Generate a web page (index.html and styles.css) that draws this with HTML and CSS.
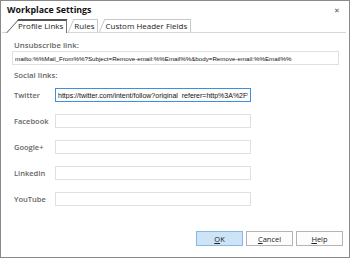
FILE: index.html
```html
<!DOCTYPE html>
<html lang="en">
<head>
  <meta charset="UTF-8">
  <title>Workplace Settings</title>
  <link rel="stylesheet" href="styles.css">
</head>
<body>

<div class="window">
  <div class="titlebar">
    <span class="title">Workplace Settings</span>
    <span class="close">&#x2715;</span>
  </div>

  <div class="tabs">
    <div class="tab active">Profile Links</div>
    <div class="tab">Rules</div>
    <div class="tab">Custom Header Fields</div>
  </div>

  <div class="panel">
    <div class="section-label">Unsubscribe link:</div>
    <input class="field wide" type="text" value="mailto:%%Mail_From%%?Subject=Remove-email:%%Email%%&amp;body=Remove-email:%%Email%%">

    <div class="section-label social">Social links:</div>
    <div class="rows">
      <div class="row">
        <label>Twitter</label>
        <input class="field focus" type="text" value="https://twitter.com/intent/follow?original_referer=http%3A%2F%2Fwww.example.com">
      </div>
      <div class="row">
        <label>Facebook</label>
        <input class="field" type="text">
      </div>
      <div class="row">
        <label>Google+</label>
        <input class="field" type="text">
      </div>
      <div class="row">
        <label>LinkedIn</label>
        <input class="field" type="text">
      </div>
      <div class="row">
        <label>YouTube</label>
        <input class="field" type="text">
      </div>
    </div>
  </div>

  <div class="buttons">
    <button class="btn default"><u>O</u>K</button>
    <button class="btn"><u>C</u>ancel</button>
    <button class="btn"><u>H</u>elp</button>
  </div>
</div>

</body>
</html>
```

FILE: styles.css
```css
body {
  margin: 0;
  font-family: "Open Sans", "Noto Sans", sans-serif;
  background: #fff;
}

.window {
  width: 350px;
  height: 258px;
  box-sizing: border-box;
  border: 1px solid #8a8a8a;
  display: flex;
  flex-direction: column;
  background: #fff;
}

.titlebar {
  height: 18px;
  display: flex;
  align-items: center;
  justify-content: space-between;
  padding: 0 9px 0 6px;
}

.title {
  font-size: 8.8px;
  font-weight: bold;
  color: #111;
}

.close {
  font-size: 7px;
  color: #555;
}

.tabs {
  display: flex;
  height: 13px;
  margin: 0 3px 0 1px;
  padding-left: 4px;
  border-bottom: 1px solid #d6d6d6;
}

.tab {
  position: relative;
  font-size: 8px;
  line-height: 13px;
  color: #222;
  padding: 0 3px 0 12px;
  border-right: 1px solid #c8c8c8;
}

.tab::before {
  content: '';
  position: absolute;
  left: 0;
  right: 11px;
  top: 0;
  bottom: 0;
  border-left: 1px solid #c8c8c8;
  border-top: 1px solid #c8c8c8;
  transform: skewX(-42deg);
  transform-origin: bottom left;
}

.tab + .tab {
  padding-left: 6px;
  margin-left: 1px;
}

.tab + .tab::before {
  right: 4px;
  transform: skewX(-22deg);
}

.tab.active {
  border-right-color: #777;
  height: 14px;
  background: #fff;
  z-index: 1;
}

.tab.active::before {
  border-color: #555;
  border-top-width: 2px;
}

.panel {
  padding: 6px 0 0 11px;
  display: flex;
  flex-direction: column;
}

.section-label {
  font-size: 7.8px;
  font-weight: 600;
  color: #666;
  line-height: 12px;
  padding-left: 2px;
}

.section-label.social {
  margin-top: 4px;
}

.field {
  box-sizing: border-box;
  height: 14px;
  width: 196px;
  margin: 0;
  padding: 0 2px;
  border: 1px solid #e0e0e0;
  border-radius: 0;
  font-family: "Liberation Sans", Arial, sans-serif;
  font-size: 7px;
  color: #111;
  outline: none;
}

.field.wide {
  width: 327px;
  font-size: 6.2px;
}

.field.focus {
  border-color: #3d8fe0;
}

.rows {
  display: flex;
  flex-direction: column;
  gap: 12px;
  margin-top: 7px;
}

.row {
  display: flex;
  align-items: center;
}

.row label {
  width: 41px;
  padding-left: 2px;
  font-size: 7.5px;
  font-weight: 600;
  color: #666;
}

.buttons {
  margin-top: auto;
  display: flex;
  justify-content: flex-end;
  gap: 3px;
  padding: 0 6px 11px 0;
}

.btn {
  width: 47px;
  height: 15px;
  padding: 0;
  font-family: "Open Sans", "Noto Sans", sans-serif;
  font-size: 7.5px;
  color: #222;
  background: #fdfdfd;
  border: 1px solid #b4b4b4;
  border-radius: 0;
}

.btn.default {
  background: #cde4f7;
  border-color: #8ab8e6;
}
```
